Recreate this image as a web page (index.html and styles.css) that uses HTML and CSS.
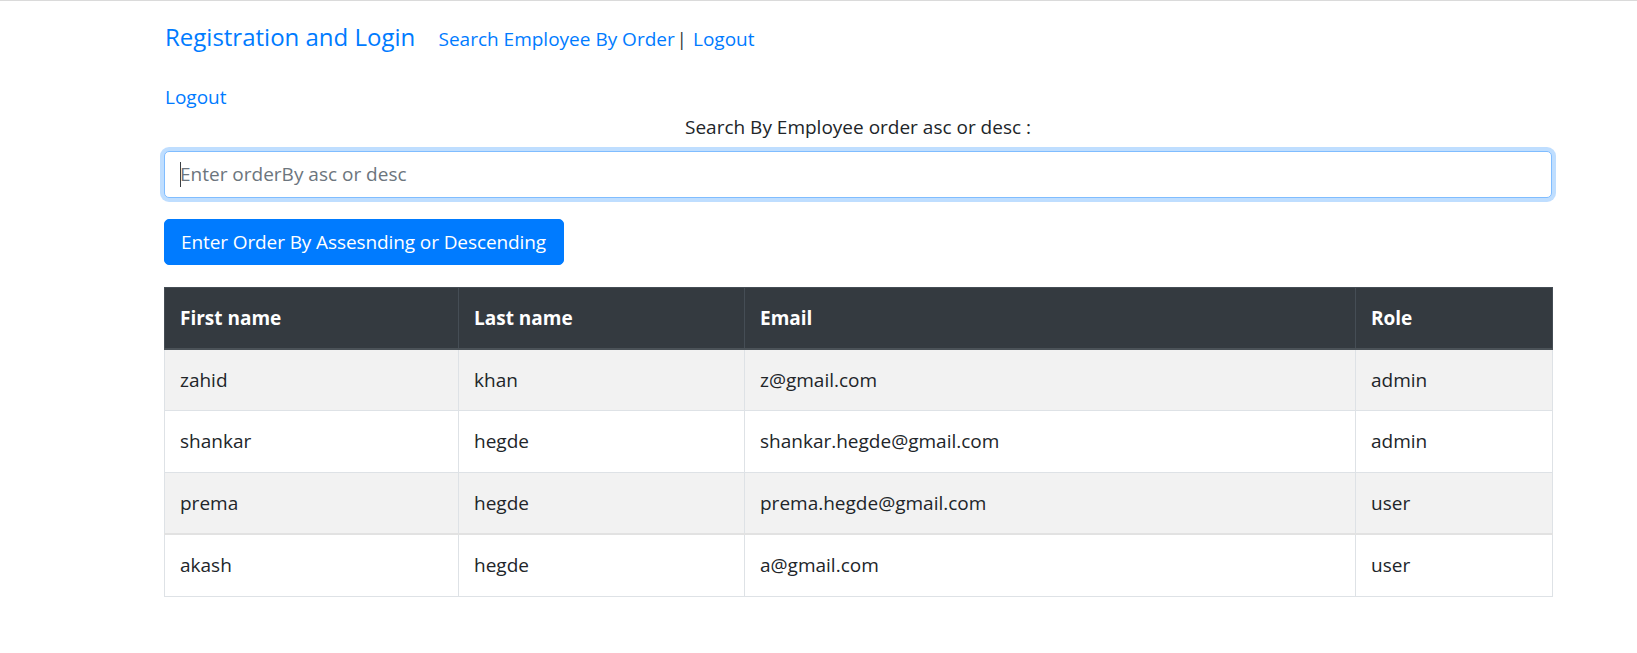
FILE: index.html
```html
<!DOCTYPE html>
<html lang="en">
<head>
<meta charset="utf-8">
<title>Search Employee By Order</title>
<link rel="stylesheet" href="styles.css">
</head>
<body>
<div class="page">
  <nav class="navbar">
    <a class="brand" href="#">Registration and Login</a>
    <a class="nav-link first" href="#">Search Employee By Order</a>
    <span class="sep">|</span>
    <a class="nav-link" href="#">Logout</a>
  </nav>
  <div class="logout-row"><a class="link" href="#">Logout</a></div>
  <div class="search-label">Search By Employee order asc or desc :</div>
  <div class="input-wrap">
    <input class="form-control" type="text" placeholder="Enter orderBy asc or desc">
    <span class="caret"></span>
  </div>
  <button class="btn" type="button">Enter Order By Assesnding or Descending</button>
  <table class="table">
    <colgroup>
      <col class="c1"><col class="c2"><col class="c3"><col class="c4">
    </colgroup>
    <thead>
      <tr><th>First name</th><th>Last name</th><th>Email</th><th>Role</th></tr>
    </thead>
    <tbody>
      <tr class="odd"><td>zahid</td><td>khan</td><td>z@gmail.com</td><td>admin</td></tr>
      <tr><td>shankar</td><td>hegde</td><td>shankar.hegde@gmail.com</td><td>admin</td></tr>
      <tr class="odd thick"><td>prema</td><td>hegde</td><td>prema.hegde@gmail.com</td><td>user</td></tr>
      <tr><td>akash</td><td>hegde</td><td>a@gmail.com</td><td>user</td></tr>
    </tbody>
  </table>
</div>
</body>
</html>
```
FILE: styles.css
```css
html, body {
  margin: 0;
  padding: 0;
  background: #fff;
}
body {
  border-top: 1px solid #dadada;
  font-family: "Open Sans", "Noto Sans", sans-serif;
  font-size: 19px;
  line-height: 30px;
  color: #212529;
}
a {
  color: #007bff;
  text-decoration: none;
}
.page {
  width: 1388px;
  margin-left: 164px;
}
.navbar {
  display: flex;
  align-items: baseline;
  padding-top: 17px;
}
.brand {
  width: 274.5px;
  font-size: 24px;
  line-height: 37.5px;
  padding-left: 1px;
  box-sizing: border-box;
}
.nav-link.first {
  width: 238px;
  white-space: nowrap;
}
.sep {
  width: 16.5px;
  color: #343a40;
}
.logout-row {
  margin-top: 26px;
  padding-left: 1px;
}
.search-label {
  text-align: center;
}
.input-wrap {
  position: relative;
  margin-top: 9px;
}
.form-control {
  display: block;
  width: 100%;
  height: 47px;
  box-sizing: border-box;
  padding: 0 15px;
  font-family: inherit;
  font-size: 19px;
  color: #495057;
  background: #fff;
  border: 1.25px solid #80bdff;
  border-radius: 5px;
  box-shadow: 0 0 0 4px rgba(0, 123, 255, 0.25);
  outline: none;
}
.form-control::placeholder {
  color: #6c757d;
  opacity: 1;
}
.caret {
  position: absolute;
  left: 16px;
  top: 11px;
  width: 1px;
  height: 25px;
  background: #3a3f44;
}
.btn {
  display: block;
  margin-top: 21.5px;
  width: 400px;
  height: 46px;
  padding: 0 15px 0 16px;
  font-family: inherit;
  font-size: 19px;
  line-height: 30px;
  color: #fff;
  background: #007bff;
  border: 1px solid #007bff;
  border-radius: 5px;
  text-align: left;
  white-space: nowrap;
  overflow: hidden;
  letter-spacing: -0.1px;
}
.table {
  margin-top: 21.5px;
  width: 1388px;
  border-collapse: collapse;
  table-layout: fixed;
}
.c1 { width: 294px; }
.c2 { width: 286px; }
.c3 { width: 611px; }
.c4 { width: 197px; }
.table th,
.table td {
  padding: 15px 15px;
  line-height: 30.5px;
  text-align: left;
  vertical-align: top;
  border: 1px solid #dee2e6;
}
.table th {
  background: #343a40;
  color: #fff;
  font-weight: 700;
  border-color: #454d55;
  border-bottom: 2px solid #4b5258;
  line-height: 30px;
}
.table td {
  font-weight: 400;
}
.table tr.odd td {
  background: #f2f2f2;
}
.table tr.thick td {
  border-bottom: 2px solid #e2e2e2;
}
```
